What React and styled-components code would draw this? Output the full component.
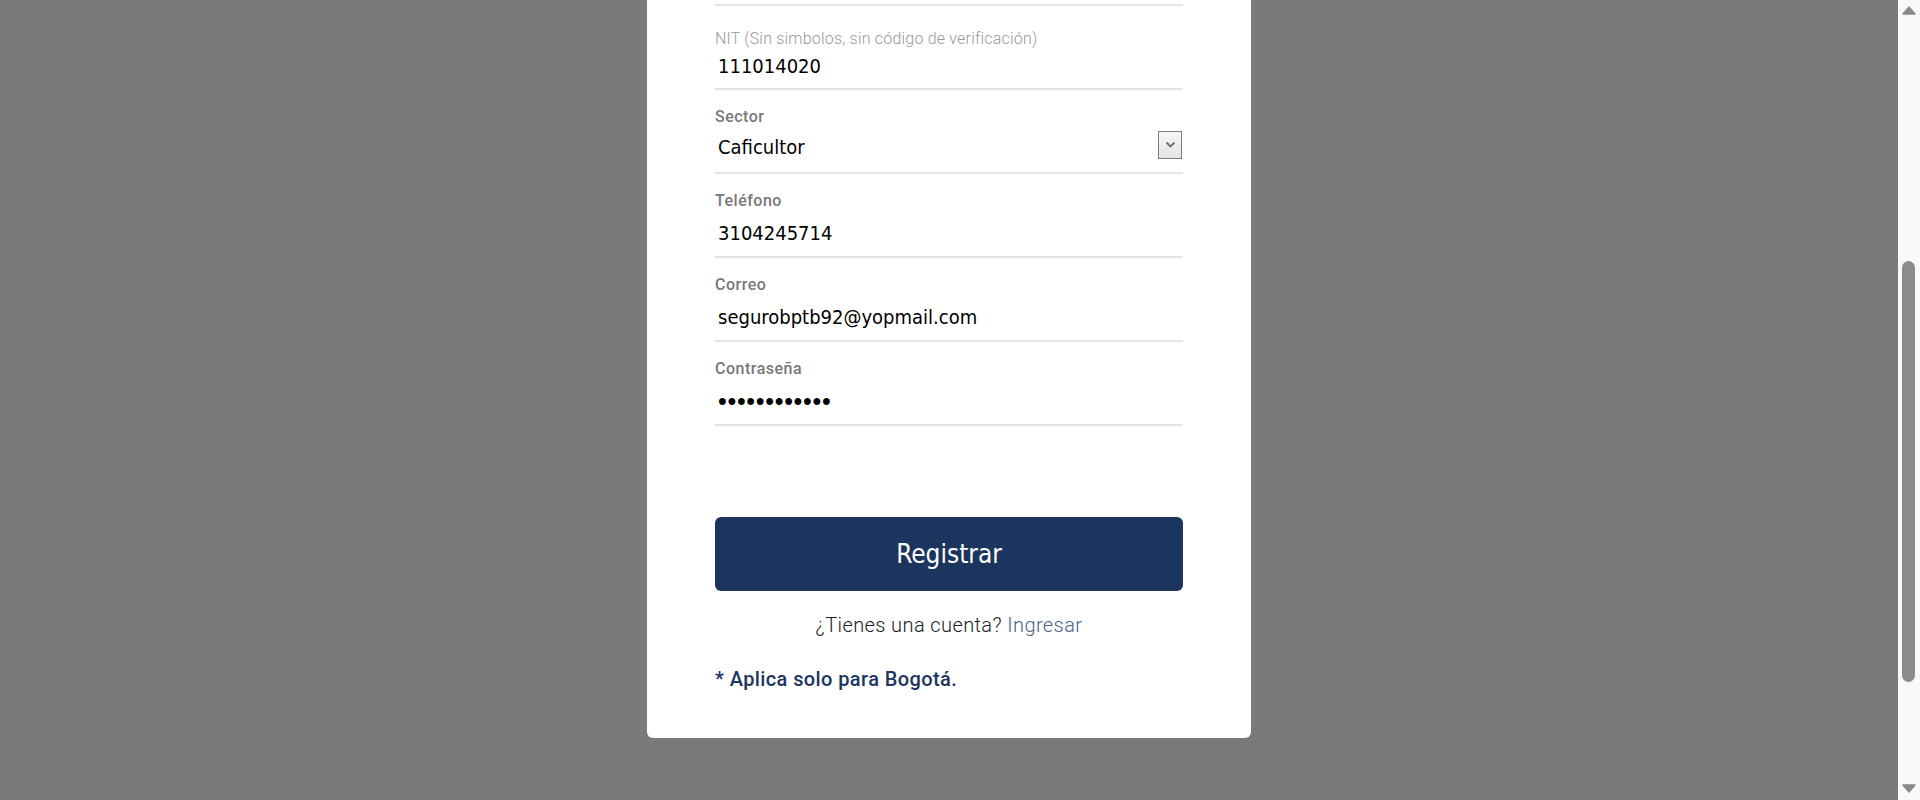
import React, { useLayoutEffect, useRef, useState } from "react";
import styled, { createGlobalStyle } from "styled-components";

const GlobalStyle = createGlobalStyle`
  html, body {
    margin: 0;
    height: 100%;
    overflow: hidden;
  }
  body {
    font-family: Roboto, "Liberation Sans", sans-serif;
  }
`;

const valueFont = `"DejaVu Sans Condensed", "Liberation Sans", sans-serif`;

const Viewport = styled.div`
  position: fixed;
  inset: 0;
  display: flex;
`;

const Backdrop = styled.div`
  flex: 1;
  background: #7a7a7a;
  overflow-y: auto;
  scrollbar-width: none;
  &::-webkit-scrollbar {
    display: none;
  }
`;

const Rail = styled.div`
  flex: none;
  width: 22px;
  background: #f9f9f9;
  display: flex;
  flex-direction: column;
`;

const RailArrow = styled.div`
  height: 22px;
  display: flex;
  justify-content: center;
  align-items: ${(p) => (p.$down ? "flex-end" : "flex-start")};
  padding: ${(p) => (p.$down ? "0 0 7px" : "6px 0 0")};
  box-sizing: border-box;
`;

const RailTrack = styled.div`
  flex: 1;
  display: flex;
  flex-direction: column;
  align-items: center;
  padding-right: 1px;
`;

const RailThumb = styled.div`
  width: 13px;
  border-radius: 7px;
  background: #8b8b8b;
`;

const Page = styled.div`
  padding: 48px 0 244px;
`;

const Card = styled.div`
  width: 604px;
  margin: 0 auto;
  box-sizing: border-box;
  background: #fff;
  border-radius: 6px;
  padding: 40px 68px 47px;
`;

const Header = styled.div`
  height: 120px;
`;

const Title = styled.h1`
  margin: 0 0 12px;
  font-size: 28px;
  line-height: 36px;
  font-weight: 500;
  color: #1c355e;
`;

const Subtitle = styled.p`
  margin: 0;
  font-size: 16px;
  line-height: 22px;
  font-weight: 300;
  color: #555;
`;

const Field = styled.div`
  padding-top: ${(p) => (p.$hint ? 24 : 18)}px;
  border-bottom: 2px solid #e4e4e4;
`;

const Label = styled.label`
  display: block;
  font-size: 16px;
  font-weight: ${(p) => (p.$hint ? 300 : 500)};
  letter-spacing: ${(p) => (p.$hint ? 0.2 : 0.5)}px;
  color: ${(p) => (p.$hint ? "#999999" : "#787878")};
  line-height: 18px;
  white-space: nowrap;
`;

const Input = styled.input`
  display: block;
  width: 100%;
  box-sizing: border-box;
  height: ${(p) => (p.$hint ? 40 : 46)}px;
  padding: 0 3px ${(p) => (p.$hint ? 4 : 0)}px;
  border: 0;
  outline: 0;
  background: transparent;
  font-family: ${valueFont};
  font-size: 20px;
  color: #000;
  caret-color: #000;

  &[type="password"] {
    font-family: "Liberation Sans", sans-serif;
    font-size: 25px;
    letter-spacing: 0.7px;
  }
`;

const SelectRow = styled.div`
  display: flex;
  align-items: center;
  height: 46px;
`;

const Select = styled.select`
  flex: 1;
  height: 46px;
  padding: 0 0 5px 3px;
  border: 0;
  outline: 0;
  background: transparent;
  appearance: none;
  font-family: ${valueFont};
  font-size: 20px;
  color: #000;
`;

const ArrowBox = styled.span`
  width: 24px;
  height: 28px;
  box-sizing: border-box;
  margin: 0 1px 9px 0;
  border: 1px solid #7c7c7c;
  background: linear-gradient(#f7f7f7, #e4e4e4);
  display: flex;
  align-items: center;
  justify-content: center;
  pointer-events: none;
`;

const SubmitButton = styled.button`
  display: block;
  width: 100%;
  height: 74px;
  margin-top: 91px;
  border: 0;
  border-radius: 6px;
  background: #1c355e;
  color: #fff;
  font-family: ${valueFont};
  font-size: 26px;
  cursor: pointer;
`;

const LoginText = styled.p`
  margin: 23px 0 0;
  text-align: center;
  font-size: 20px;
  letter-spacing: 0.4px;
  line-height: 22px;
  font-weight: 300;
  color: #222;
`;

const LoginLink = styled.a`
  color: #4a6388;
  text-decoration: none;
`;

const Note = styled.p`
  margin: 31px 0 0;
  font-size: 20px;
  letter-spacing: 0.4px;
  line-height: 24px;
  font-weight: 500;
  color: #1c355e;
`;

const Chevron = () => (
  <svg width="11" height="7" viewBox="0 0 11 7">
    <polyline points="1.5,1.5 5.5,5.5 9.5,1.5" fill="none" stroke="#6e6e6e" strokeWidth="1.9" />
  </svg>
);

const Triangle = ({ down }) => (
  <svg width="14" height="9" viewBox="0 0 14 9">
    <polygon
      points={down ? "1,1 13,1 7,8" : "1,8 13,8 7,1"}
      fill="#8b8b8b"
      stroke="#8b8b8b"
      strokeWidth="1.5"
      strokeLinejoin="round"
    />
  </svg>
);

const camposPrevios = [
  { label: "Razón social", value: "Seguro BPTB 92" },
  { label: "Tipo de persona", value: "Jurídica", opciones: ["Jurídica", "Natural"] },
  { label: "Representante legal", value: "Carlos Pérez" },
];

const sectores = ["Caficultor", "Ganadero", "Agricultor", "Floricultor"];

export default function App() {
  const scrollRef = useRef(null);
  const nitRef = useRef(null);
  const claveRef = useRef(null);
  const [nit, setNit] = useState("111014020");
  const [sector, setSector] = useState("Caficultor");
  const [telefono, setTelefono] = useState("3104245714");
  const [correo, setCorreo] = useState("segurobptb92@yopmail.com");
  const [clave, setClave] = useState("Seguro2024**");
  const [barra, setBarra] = useState({ top: 0, alto: 0 });

  const medirBarra = () => {
    const box = scrollRef.current;
    if (!box) return;
    const pista = box.clientHeight - 44;
    setBarra({
      top: (pista * box.scrollTop) / box.scrollHeight,
      alto: (pista * box.clientHeight) / box.scrollHeight,
    });
  };

  useLayoutEffect(() => {
    const box = scrollRef.current;
    const campo = nitRef.current;
    if (!box || !campo) return;
    claveRef.current?.focus({ preventScroll: true });
    const largo = claveRef.current?.value.length || 0;
    claveRef.current?.setSelectionRange(largo, largo);
    const top =
      campo.getBoundingClientRect().top - box.getBoundingClientRect().top + box.scrollTop;
    box.scrollTop = top - 6;
    medirBarra();
  }, []);

  return (
    <>
      <GlobalStyle />
      <Viewport>
        <Backdrop ref={scrollRef} onScroll={medirBarra}>
          <Page>
            <Card>
              <Header>
                <Title>Registro</Title>
                <Subtitle>
                  Completa los datos de tu empresa para crear una cuenta y acceder a los
                  seguros disponibles.
                </Subtitle>
              </Header>

              {camposPrevios.map((c) => (
                <Field key={c.label}>
                  <Label>{c.label}</Label>
                  {c.opciones ? (
                    <SelectRow>
                      <Select defaultValue={c.value}>
                        {c.opciones.map((o) => (
                          <option key={o}>{o}</option>
                        ))}
                      </Select>
                      <ArrowBox>
                        <Chevron />
                      </ArrowBox>
                    </SelectRow>
                  ) : (
                    <Input defaultValue={c.value} />
                  )}
                </Field>
              ))}

              <Field $hint ref={nitRef}>
                <Label $hint>NIT (Sin simbolos, sin código de verificación)</Label>
                <Input $hint value={nit} onChange={(e) => setNit(e.target.value)} />
              </Field>

              <Field>
                <Label>Sector</Label>
                <SelectRow>
                  <Select value={sector} onChange={(e) => setSector(e.target.value)}>
                    {sectores.map((s) => (
                      <option key={s}>{s}</option>
                    ))}
                  </Select>
                  <ArrowBox>
                    <Chevron />
                  </ArrowBox>
                </SelectRow>
              </Field>

              <Field>
                <Label>Teléfono</Label>
                <Input value={telefono} onChange={(e) => setTelefono(e.target.value)} />
              </Field>

              <Field>
                <Label>Correo</Label>
                <Input value={correo} onChange={(e) => setCorreo(e.target.value)} />
              </Field>

              <Field>
                <Label>Contraseña</Label>
                <Input
                  ref={claveRef}
                  type="password"
                  value={clave}
                  onChange={(e) => setClave(e.target.value)}
                />
              </Field>

              <SubmitButton type="button">Registrar</SubmitButton>

              <LoginText>
                ¿Tienes una cuenta? <LoginLink href="#">Ingresar</LoginLink>
              </LoginText>

              <Note>* Aplica solo para Bogotá.</Note>
            </Card>
          </Page>
        </Backdrop>
        <Rail>
          <RailArrow>
            <Triangle />
          </RailArrow>
          <RailTrack>
            <div style={{ height: barra.top, flex: "none" }} />
            <RailThumb style={{ height: barra.alto }} />
          </RailTrack>
          <RailArrow $down>
            <Triangle down />
          </RailArrow>
        </Rail>
      </Viewport>
    </>
  );
}
